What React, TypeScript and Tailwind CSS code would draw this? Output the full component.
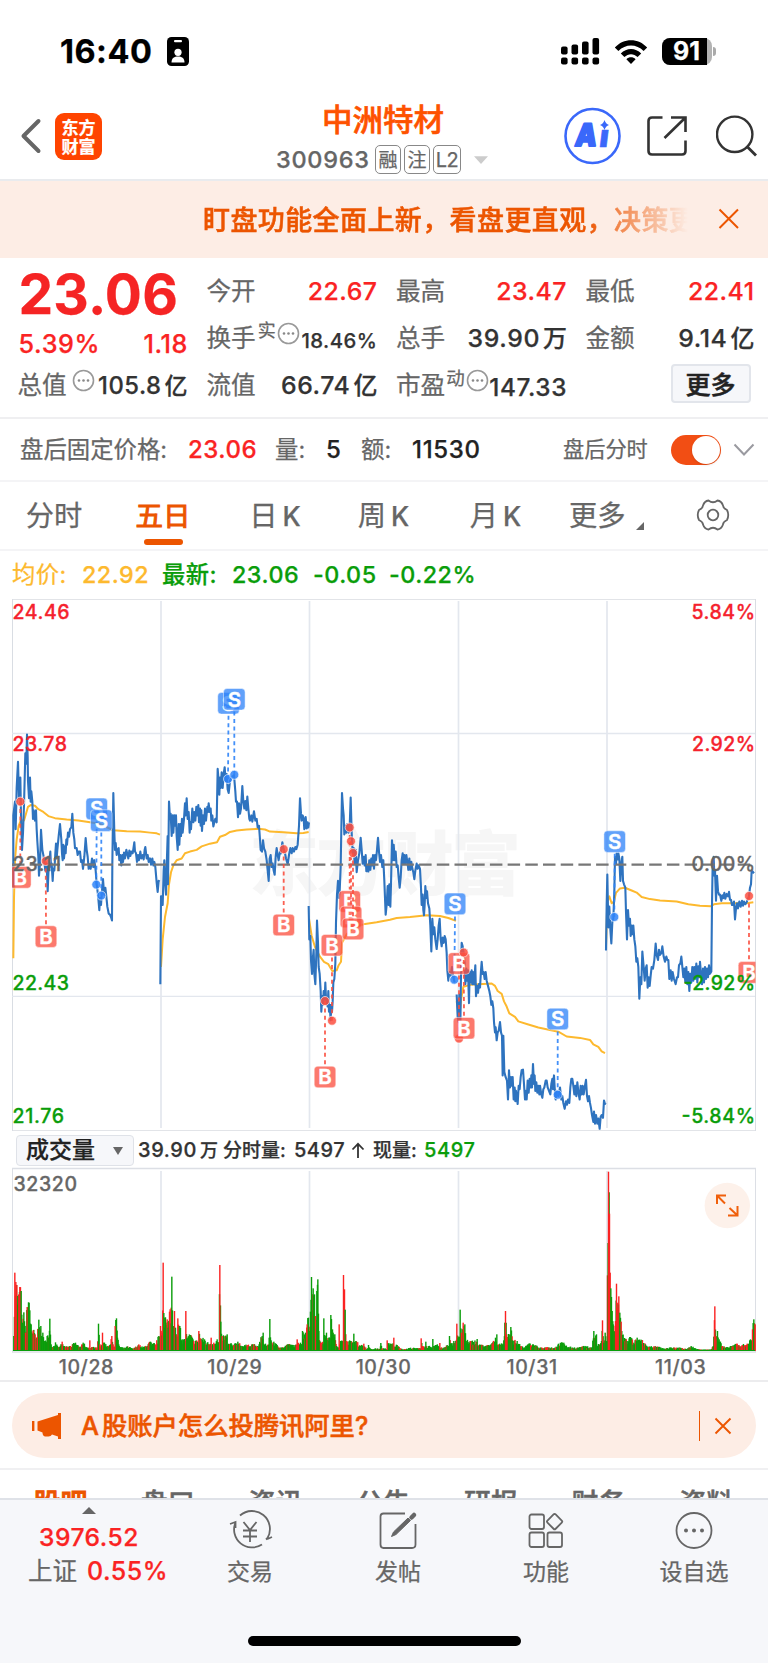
import React from 'react';

const FONT = "font-['Inter','Noto_Sans_CJK_SC',sans-serif]";

/* ---------- price chart data (per-session local units) ---------- */

type Session = { ox: number; price: string; avg: string };

const SESSIONS: Session[] = [
  {
    ox: 0,
    price:
      '40,850 40,640 45,600 47,680 50,560 54,484 57,590 61,530 63,640 66,740 69,690 72,610 76,460 79,490 81,405 83,470 84,540 87,590 90,530 92,600 94,570 97,600 99,650 101,625 105,655 108,625 110,680 112,715 115,760 117,815 120,780 123,682 127,740 131,760 136,800 140,780 143,860 146,790 149,765 151,745 153,790 155,780 158,830 160,795 163,800 166,750 168,722 170,765 172,740 176,700 180,665 184,710 186,750 188,770 190,725 192,765 195,730 197,750 199,710 201,725 204,690 207,702 210,680 214,675 217,635 220,690 223,710 225,735 230,735 233,755 236,745 240,745 243,775 246,770 249,795 253,760 257,706 260,740 263,760 266,795 269,782 272,795 276,765 280,790 283,770 287,800 290,840 294,870 298,915 300,880 303,900 306,860 309,825 311,850 313,870 316,850 319,875 322,905 326,925 330,928 333,935 336,945 337,780 340,575 343,690 345,740 347,720 350,755 353,740 356,735 358,770 361,755 364,785 367,755 369,775 372,748 375,765 379,740 382,752 385,765 388,742 391,758 394,745 398,750 400,738 403,718 405,745 408,750 411,775 414,755 417,770 421,745 424,765 428,755 431,768 434,740 436,732 440,765 443,755 446,775 450,765 453,783 457,765 460,785 463,775 466,790 470,835 473,862 476,830 479,832',
    avg: '40,1055 42,880 45,770 50,710 56,670 62,655 72,655 78,635 84,615 92,610 105,612 115,622 130,630 145,642 165,648 200,652 235,655 270,660 300,665 340,683 380,686 420,687 450,690 470,692 480,696',
  },
  {
    ox: 0,
    price:
      '481,1130 483,875 486,875 488,900 491,800 493,770 495,830 498,870 501,760 503,700 504,840 507,600 510,650 512,635 515,700 518,640 520,690 523,640 526,670 528,640 530,700 533,740 536,665 538,725 541,665 543,700 546,650 548,690 552,650 555,605 557,640 560,590 563,650 566,630 569,690 571,660 573,680 577,620 580,660 583,630 586,655 589,615 592,640 595,610 597,660 600,620 602,670 604,625 606,685 609,640 612,665 615,620 618,655 622,615 624,630 626,605 629,630 632,620 634,655 637,640 640,672 643,660 646,650 650,660 653,505 656,540 658,580 660,530 662,560 665,515 668,560 671,520 674,500 677,540 680,520 683,565 686,575 690,540 695,530 702,523 706,570 708,600 711,600 714,645 717,605 720,635 723,620 727,555 730,600 733,620 736,598 739,625 742,585 745,620 748,650 750,655 754,640 757,658 762,628 766,655 770,650 773,675 777,670 780,710 782,740 786,745 789,712 792,735 796,745 800,770 803,800 806,830 809,765 812,755 815,790 818,780 821,800 824,812 827,760 830,735 833,755 836,770 840,745 843,750 847,718 851,738 855,750 858,765 863,782 867,755 871,735 875,750 878,735 882,745 886,732 889,738 893,725 897,670 900,590 903,635 905,655 908,640 911,650 913,680 915,675 917,645 920,678 923,660 925,675 927,660',
    avg: '483,1080 488,1000 495,935 503,895 507,840 513,805 520,785 530,770 545,765 555,750 570,745 590,740 605,730 630,722 651,718 660,702 675,697 690,688 710,684 740,681 775,679 795,681 810,687 850,689 890,692 910,691 926,688',
  },
  {
    ox: 300,
    price:
      '26,903 28,1000 31,990 33,1060 36,1100 39,1050 41,1030 43,1100 46,1130 49,1040 51,945 54,1010 56,1080 59,1100 62,1150 64,1210 67,1165 69,1190 71,1150 74,1175 76,1125 78,1170 80,1180 83,1195 85,1150 87,1210 89,1190 92,1235 94,1190 96,1210 98,1180 100,1125 103,1115 106,1070 108,950 111,870 114,830 117,880 119,860 122,790 124,680 126,575 129,620 131,640 133,695 136,670 139,690 142,665 146,690 149,675 152,588 155,690 158,750 161,735 164,780 167,740 170,805 174,770 178,750 182,705 185,740 188,780 191,760 194,785 197,755 199,802 202,785 205,803 208,770 211,798 214,765 217,785 219,755 222,795 225,755 228,770 231,740 234,705 237,745 240,775 243,755 247,790 250,770 253,830 257,928 260,900 263,845 266,900 268,840 271,905 273,840 276,712 279,770 281,725 284,770 287,745 290,790 293,785 296,820 299,850 302,820 305,770 308,750 310,780 313,755 316,780 319,755 322,775 325,798 328,765 331,798 334,775 337,795 340,805 343,825 346,800 350,780 353,795 356,785 360,795 363,850 365,900 368,870 370,915 372,930 374,900 376,845 379,880 381,860 384,895 388,910 391,960 394,1035 397,940 400,985 403,965 406,1000 410,1028 413,1000 416,960 419,940 422,1000 425,1020 428,995 431,1010 434,990 437,1000 440,1040 442,1090 445,1120 448,1095 452,1105 456,1080 460,1110 464,1125',
    avg: '27,940 35,990 45,1022 60,1050 72,1065 85,1072 97,1092 110,1090 116,1075 123,1065 126,1010 140,985 160,965 195,955 230,950 270,943 290,938 330,935 380,930 420,932 445,938 468,946',
  },
  {
    ox: 300,
    price:
      '470,1160 473,1225 476,1240 478,1160 481,1260 483,1100 485,1010 488,1020 491,1040 494,1070 496,1130 499,1085 501,1120 504,1090 507,1185 509,1095 512,1125 515,1090 517,1130 519,1095 522,1130 526,1075 528,1165 531,1135 534,1155 537,1130 540,1140 543,1090 545,1065 548,1100 551,1095 554,1115 557,1095 560,1120 564,1135 568,1150 571,1165 574,1190 577,1180 580,1200 582,1240 585,1270 587,1255 590,1293 593,1270 596,1265 600,1240 603,1270 606,1280 608,1395 610,1280 613,1385 617,1400 621,1410 624,1465 627,1380 630,1430 633,1400 636,1425 638,1400 641,1465 644,1430 646,1470 648,1440 653,1478 656,1425 659,1435 662,1400 665,1380 669,1378 672,1420 675,1465 678,1440 680,1465 683,1410 686,1445 689,1405 692,1430 694,1395 696,1430 699,1362 702,1420 704,1395 706,1440 709,1415 712,1445 715,1425 718,1450 720,1425 724,1450 727,1460 730,1435 733,1430 737,1410 740,1410 743,1430 747,1440 751,1450 754,1420 757,1405 759,1435 762,1395 764,1430 767,1465 770,1440 775,1455 780,1430 784,1465 787,1455 790,1475 794,1492 798,1470 801,1480 804,1465 808,1475 811,1430 814,1405 817,1405 820,1425 823,1450 826,1425 829,1455 832,1415 836,1450 839,1465 842,1425 845,1450 848,1425 851,1450 854,1430 858,1408 861,1455 864,1470 867,1455 870,1475 873,1490 876,1510 880,1530 882,1500 885,1535 888,1510 892,1535 895,1520 899,1550 902,1515 905,1510 909,1518 912,1468 915,1478 917,1475',
    avg: '470,1180 478,1230 484,1170 490,1138 510,1132 575,1128 585,1135 593,1150 605,1158 612,1180 620,1195 628,1215 645,1225 655,1238 685,1247 715,1256 750,1263 775,1268 800,1282 840,1286 870,1292 880,1305 895,1312 905,1325 915,1330',
  },
  {
    ox: 500,
    price:
      '318,1032 320,900 322,812 325,965 328,905 331,970 334,1012 337,950 340,940 343,860 345,760 348,780 350,750 353,768 355,750 358,765 361,830 364,780 367,760 369,830 372,840 376,850 378,920 381,1000 384,915 387,960 390,940 392,990 395,960 397,985 400,960 403,1000 406,1020 409,1065 412,1055 415,1080 418,1172 421,1110 424,1130 427,1035 431,1080 434,1120 437,1085 440,1075 443,1140 446,1110 449,1135 452,1105 455,1080 459,1085 463,1060 467,1012 470,1045 474,1060 477,1030 480,1045 484,1040 487,1020 491,1050 495,1065 499,1050 502,1060 505,1060 508,1115 512,1090 515,1120 518,1095 522,1115 527,1130 531,1110 534,1110 537,1075 541,1070 544,1050 547,1080 550,1110 553,1085 556,1125 559,1080 562,1130 565,1095 568,1150 571,1100 574,1125 577,1080 580,1120 583,1080 586,1110 589,1070 592,1125 595,1078 598,1110 600,1065 603,1100 606,1130 609,1085 612,1125 615,1080 618,1115 621,1085 624,1110 627,1075 630,1100 634,1093 636,900 638,780 641,760 643,815 645,800 648,888 651,815 654,860 657,870 660,870 664,888 667,872 670,880 673,865 676,882 680,868 684,875 687,862 690,885 693,885 696,900 700,900 702,890 705,942 708,910 711,895 714,910 718,890 722,905 726,888 729,902 732,890 736,898 740,892 747,875 750,850 753,840 755,800 762,808',
    avg: '318,1020 322,890 328,875 335,895 342,890 348,865 360,852 375,850 395,858 410,864 425,877 450,883 480,887 530,890 565,898 600,902 633,904 642,898 665,895 700,895 740,895 760,892',
  },
];

type Mark = { k: 'B' | 'S'; x: number; y: number; dx: number; dy: number };

const MARKS: Mark[] = [
  { k: 'S', x: 96.7, y: 808.9, dx: 96.3, dy: 884.6 },
  { k: 'S', x: 101.3, y: 820.6, dx: 101.3, dy: 895.6 },
  { k: 'S', x: 228.5, y: 703.3, dx: 228, dy: 779 },
  { k: 'S', x: 234.3, y: 699.3, dx: 234.3, dy: 774.8 },
  { k: 'B', x: 20.3, y: 877.4, dx: 20.3, dy: 801.6 },
  { k: 'B', x: 46, y: 936.6, dx: 45.7, dy: 861 },
  { k: 'B', x: 283.7, y: 925, dx: 283.7, dy: 849.2 },
  { k: 'B', x: 325, y: 1077, dx: 325, dy: 1001 },
  { k: 'B', x: 332, y: 945.2, dx: 332, dy: 1020.7 },
  { k: 'B', x: 349.7, y: 901.5, dx: 349.7, dy: 827.5 },
  { k: 'B', x: 351, y: 917, dx: 351, dy: 841.2 },
  { k: 'B', x: 353, y: 929, dx: 353, dy: 853 },
  { k: 'S', x: 455, y: 903.9, dx: 454.3, dy: 979.7 },
  { k: 'B', x: 459, y: 963.5, dx: 459, dy: 1038.6 },
  { k: 'B', x: 464, y: 1028.2, dx: 463.7, dy: 952.5 },
  { k: 'S', x: 557.7, y: 1019, dx: 557.7, dy: 1094.7 },
  { k: 'S', x: 614.7, y: 841.6, dx: 614.3, dy: 917 },
  { k: 'B', x: 749, y: 972.4, dx: 749, dy: 896 },
];

const LABELS: [string, number, 'start' | 'end', string, number][] = [
  ['24.46', 619, 'start', '#f5222d', 57],
  ['23.78', 751, 'start', '#f5222d', 54.5],
  ['23.11', 871, 'start', '#666666', 48.5],
  ['22.43', 990, 'start', '#0a9d0a', 56.5],
  ['21.76', 1122.6, 'start', '#0a9d0a', 51.5],
  ['5.84%', 619, 'end', '#f5222d', 63.5],
  ['2.92%', 751, 'end', '#f5222d', 63],
  ['0.00%', 871, 'end', '#666666', 63.5],
  ['-2.92%', 990, 'end', '#0a9d0a', 71.5],
  ['-5.84%', 1122.6, 'end', '#0a9d0a', 73.5],
];

function PriceChart() {
  return (
    <svg className="block h-[535px] w-[768px]" viewBox="0 597 768 535">
      <defs>
        <clipPath id="plot">
          <rect x="12" y="598" width="743.5" height="533" />
        </clipPath>
      </defs>
      <text x="249" y="890" fontSize="70" fontWeight="900" fill="#f6f6f6" textLength="272" fontFamily="'Noto Sans CJK SC', sans-serif">
        东方财富
      </text>
      <g fill="none" stroke="#e3e7ee">
        <path d="M12 599.5H756M12 1130.5H756" stroke="#e2e4e8" />
        <path d="M12.5 599V1131M755.5 599V1131" stroke="#d9dde3" />
        <path d="M12 733.5H755M12 996.3H755" strokeWidth="1.3" />
        <path d="M161 601V1128M309.5 601V1128M458.5 601V1128M607 601V1128" strokeWidth="1.7" />
      </g>
      {SESSIONS.map((s, i) => (
        <g key={i} transform={`translate(${s.ox} 595) scale(0.33333 0.34439)`} fill="none" strokeLinejoin="round">
          <polyline points={s.avg} stroke="#fdb92e" strokeWidth="2" vectorEffect="non-scaling-stroke" />
          <polyline points={s.price} stroke="#2e73bf" strokeWidth="2.1" vectorEffect="non-scaling-stroke" />
        </g>
      ))}
      <path d="M12 864.7H755" stroke="#777" strokeWidth="2.2" strokeDasharray="12.5 5.2" />
      <g clipPath="url(#plot)">
        {MARKS.map((m, i) => {
          const c = m.k === 'B' ? '#fb4f3f' : '#2f84f8';
          const end = m.dy > m.y ? m.y + 12 : m.y - 12;
          return (
            <g key={i}>
              <path d={`M${m.dx} ${m.dy}L${m.x} ${end}`} stroke={c} strokeWidth="1.8" strokeDasharray="4 3.4" opacity=".9" />
              <circle cx={m.dx} cy={m.dy} r="4.5" fill={c} fillOpacity=".85" stroke="#fff" strokeWidth=".8" strokeOpacity=".8" />
              <rect x={m.x - 10.8} y={m.y - 10.8} width="21.6" height="21.6" rx="3.6" fill={c} fillOpacity=".76" stroke="#fff" strokeWidth=".8" strokeOpacity=".6" />
              <text x={m.x} y={m.y + 7.3} fontSize="20.5" fontWeight="600" fill="#fff" stroke="#fff" strokeWidth=".4" textAnchor="middle" fontFamily="Inter, sans-serif">
                {m.k}
              </text>
            </g>
          );
        })}
      </g>
      {LABELS.map(([t, y, a, c, w]) => (
        <text key={t} x={a === 'start' ? 12.5 : 755} y={y} textAnchor={a} fill={c} stroke={c} strokeWidth=".3" fontSize="19.5" fontWeight="500" textLength={w} fontFamily="Inter, sans-serif">
          {t}
        </text>
      ))}
    </svg>
  );
}

/* ---------- volume chart ---------- */

const VOLUME =
  '40:45g 43:235r 46:207r 49:198r 52:165g 55:170r 58:192r 62:180g 66:85g 70:116g 75:55r 80:132r 84:146g 88:122g 92:80 98:62 104:50 110:42 115:94g 121:75g 127:55 133:30 140:45g 145:40 148:97g 152:20 160:15 165:26 172:12 185:28 195:12 210:15 225:25 240:12 248:25 260:10 268:32r 275:12 290:10 294:82g 298:20 306:55r 312:25 320:15 330:20 334:45r 338:20 344:75r 348:98g 351:40 356:15 370:8 380:14 400:8 415:20 430:12 450:28 465:20 475:45 480:75r 485:55 488:265r 490:114g 493:100 500:95r 503:70 507:118r 512:130r 514:223g 517:75 522:120r 525:70 532:98r 538:75 545:35 556:120r 559:38 570:48 580:30 595:60r 600:38 612:35 620:25 632:40r 640:25 650:35 655:25 658:258r 661:88g 665:45 680:50g 690:22 700:18 712:28 725:15 740:18 760:20 770:12 785:45 788:55g 795:22 806:40g 808:96g 812:32 820:28 830:18 845:10 865:20 880:18 890:35r 900:25 906:60g 915:55 920:80r 924:100g 928:60 933:222g 938:188g 942:170g 945:105r 949:180g 952:215g 955:60 962:25 970:98g 974:40 978:55g 985:40 991:108g 996:65g 1003:50 1008:15 1016:80r 1022:30 1029:228r 1032:185r 1034:124g 1038:30 1050:30 1060:52g 1066:30 1080:15 1090:22 1098:5 1104:18 1112:5 1125:8 1138:6 1141:24g 1145:8 1154:8 1160:32r 1170:22 1180:40r 1190:18 1200:8 1215:5 1230:10 1250:8 1262:38r 1266:15 1276:28g 1285:14 1297:36g 1305:18 1318:24r 1330:10 1340:18 1347:45g 1352:22 1360:30 1369:82r 1373:40 1379:124g 1383:55 1388:85r 1393:80g 1397:30 1410:30 1430:36g 1440:18 1455:15 1475:22 1485:40 1489:50g 1498:22 1508:20 1513:85g 1515:120r 1518:50 1526:50 1531:72g 1536:32 1550:30 1562:15 1570:10 1585:22 1600:18 1620:10 1640:12 1665:10 1674:22 1690:25 1705:12 1730:10 1750:14 1775:12 1780:60g 1788:50g 1795:20 1803:30 1806:92r 1810:25 1814:55g 1819:30 1824:538r 1827:412r 1829:235r 1831:188g 1835:120g 1838:80 1845:90r 1848:202r 1850:130r 1855:164r 1858:115g 1862:88r 1866:48 1880:30 1890:42 1900:25 1910:40 1922:34 1935:20 1945:12 1960:14 1975:12 1990:8 2010:10 2040:10 2058:6 2072:15 2085:8 2105:3 2130:4 2138:15 2143:134r 2146:45 2151:60g 2156:35 2165:15 2180:12 2195:14 2210:22 2225:18 2240:22 2250:35 2256:65r 2260:95g 2264:80';

type Bar = { x: number; h: number; red: boolean };

function buildBars(): Bar[] {
  let seed = 7;
  const rnd = () => {
    seed = (seed * 16807) % 2147483647;
    return seed / 2147483647;
  };
  const keys = VOLUME.split(' ').map((p) => {
    const m = p.match(/^(\d+):(\d+)([rg]?)$/)!;
    return { x: +m[1], h: +m[2], c: m[3] };
  });
  const fill: Bar[] = [];
  const peaks: Bar[] = [];
  for (let i = 0; i < keys.length; i++) {
    const a = keys[i];
    const b = keys[i + 1];
    peaks.push({ x: a.x / 3, h: a.h / 3, red: a.c === 'r' || (a.c === '' && rnd() < 0.3) });
    if (!b) break;
    const la = Math.min(a.h, a.c && b.x - a.x > 5 ? b.h : a.h);
    const lb = Math.min(b.h, b.c && b.x - a.x > 5 ? a.h : b.h);
    for (let x = a.x + 1.9; x < b.x - 0.8; x += 1.9) {
      const t = (x - a.x) / (b.x - a.x);
      const h = (la + (lb - la) * t) * (0.62 + 0.5 * rnd());
      fill.push({ x: x / 3, h: Math.max(h, 4) / 3, red: rnd() < 0.27 });
    }
  }
  return [...fill, ...peaks];
}

const BARS = buildBars();

function VolumeChart() {
  return (
    <svg className="block h-[186px] w-[768px]" viewBox="0 1167 768 186">
      <g fill="none" stroke="#dcdfe5">
        <path d="M12 1168.5H756" strokeWidth="1.6" />
        <path d="M12.5 1168V1352M755.5 1168V1352" />
        <path d="M161 1171V1351M309.5 1171V1351M458.5 1171V1351M607 1171V1351" stroke="#e3e7ee" strokeWidth="1.7" />
        <path d="M12 1352H756" strokeWidth="1.4" />
      </g>
      {BARS.map((b, i) => (
        <rect key={i} x={b.x - 0.2} y={1351 - b.h} width="1.4" height={b.h} fill={b.red ? '#fb2222' : '#0a9d0a'} />
      ))}
      <path d="M13 1350.5H755" stroke="#0a9d0a" strokeWidth="1" />
      <text x="13.5" y="1190.6" fontSize="19.5" fontWeight="500" fill="#666" stroke="#666" strokeWidth=".3" textLength="63.5" fontFamily="Inter, sans-serif">
        32320
      </text>
      <circle cx="727.3" cy="1205.5" r="22.7" fill="#fdf1ea" />
      <g stroke="#f0600c" strokeWidth="2" fill="none">
        <path d="M717 1204V1195.500H726M717.500 1196L725 1203.500" />
        <path d="M728 1215.500H737.500V1206M729.500 1208L737 1215" />
      </g>
    </svg>
  );
}

/* ---------- small pieces ---------- */

const Dots = () => (
  <svg className="size-[23px] shrink-0" viewBox="0 0 23 23">
    <circle cx="11.500" cy="11.500" r="10" fill="none" stroke="#999" strokeWidth="1.600" />
    <circle cx="7" cy="11.500" r="1.300" fill="#888" />
    <circle cx="11.500" cy="11.500" r="1.300" fill="#888" />
    <circle cx="16" cy="11.500" r="1.300" fill="#888" />
  </svg>
);

const Label = ({ children }: { children: React.ReactNode }) => <span className="-ml-px text-[24.6px] text-[#666]">{children}</span>;

const Cell = ({ label, value, unit, red }: { label: string; value: string; unit?: string; red?: boolean }) => (
  <div className="flex h-[47px] items-center justify-between">
    <Label>{label}</Label>
    <span className={red ? 'text-[24.8px] font-medium tracking-[0.5px] text-[#fa2323]' : 'text-[24.8px] font-medium tracking-[0.6px] text-[#333]'}>
      {value}
      {unit && <span className="ml-[3px] text-[24px] tracking-normal">{unit}</span>}
    </span>
  </div>
);

function StatusBar() {
  return (
    <div className="flex h-[93px] items-center pt-[10px] text-black">
      <span className="ml-[60px] w-[107px] pt-[2px] text-[32.500px] font-bold tracking-[0.5px]">16:40</span>
      <svg className="h-[29px] w-[22px]" viewBox="0 0 22 29">
        <rect width="22" height="29" rx="4.500" />
        <rect x="7" y="3" width="8" height="2.300" rx="1" fill="#fff" />
        <circle cx="11" cy="15.300" r="3.600" fill="#fff" />
        <path d="M4.500 25.500c0-4.500 3-6 6.500-6s6.500 1.500 6.500 6z" fill="#fff" />
      </svg>
      <svg className="ml-[372px] h-[28px] w-[40px] -translate-y-px" viewBox="0 0 40 28">
        <rect x="0" y="9.500" width="6.600" height="8" rx="2" />
        <rect x="10.500" y="7.500" width="6.600" height="10" rx="2" />
        <rect x="21" y="4.500" width="6.600" height="13" rx="2" />
        <rect x="31.500" y="1" width="6.600" height="16.500" rx="2" />
        <rect x="0" y="20.500" width="6.600" height="7" rx="2" />
        <rect x="10.500" y="20.500" width="6.600" height="7" rx="2" />
        <rect x="21" y="20.500" width="6.600" height="7" rx="2" />
        <rect x="31.500" y="20.500" width="6.600" height="7" rx="2" />
      </svg>
      <svg className="ml-[13px] h-[26px] w-[34px]" viewBox="0 0 34 26">
        <path d="M.8 8.500C9.500-1.300 24.500-1.300 33.200 8.500L29.600 12C22.500 4.600 11.500 4.600 4.400 12z" />
        <path d="M6.800 14.500c5.600-6 14.800-6 20.400 0l-3.600 3.600c-3.800-3.900-9.400-3.900-13.200 0z" />
        <path d="M12.400 20.200c2.600-2.500 6.600-2.500 9.200 0L17 25z" />
      </svg>
      <div className="ml-[14px] flex h-[27px] w-[50px] rounded-[8px] bg-[#b3b3b3]">
        <div className="flex h-[27px] w-[45px] items-center justify-center rounded-l-[8px] bg-black pl-[4px] text-[25px] font-bold text-white">91</div>
      </div>
      <div className="ml-[1px] h-[9px] w-[3px] rounded-r-full bg-[#aaa]" />
    </div>
  );
}

function Header() {
  return (
    <div className="flex h-[88px] items-center border-b-2 border-[#e9ebee] text-[#666]">
      <svg className="ml-[20px] h-[38px] w-[22px]" viewBox="0 0 22 38">
        <path d="M18.500 4L3.500 19L18.500 34" fill="none" stroke="#666" strokeWidth="4" strokeLinecap="round" strokeLinejoin="round" />
      </svg>
      <div className="ml-[13px] flex size-[47px] flex-col items-center justify-center rounded-[9px] bg-[#ff4400] font-['Noto_Sans_CJK_SC',sans-serif] text-[17px] leading-[19px] font-bold text-white">
        <span>东方</span>
        <span>财富</span>
      </div>
      <div className="ml-[174px] flex w-[220px] flex-col">
        <div className="ml-[46px] pt-[7px] text-[30.500px] font-medium text-[#fe5200] [-webkit-text-stroke:0.6px_#fe5200]">中洲特材</div>
        <div className="mt-[10px] flex h-[29px] items-center">
          <span className="w-[99px] text-[23.500px] font-medium tracking-[0.7px]">300963</span>
          <span className="flex h-[29px] w-[26px] items-center justify-center rounded-[5px] border border-[#888] pt-px text-[19px]">融</span>
          <span className="ml-[3px] flex h-[29px] w-[26px] items-center justify-center rounded-[5px] border border-[#888] pt-px text-[19px]">注</span>
          <span className="ml-[3px] flex h-[29px] w-[28px] items-center justify-center rounded-[5px] border border-[#888] text-[20px] tracking-[-0.5px]">L2</span>
          <svg className="ml-[13px] h-[8px] w-[14px]" viewBox="0 0 14 8">
            <path d="M0 0.300H14L7 8z" fill="#ccc" />
          </svg>
        </div>
      </div>
      <svg className="ml-[67px] size-[58px] shrink-0" viewBox="0 0 58 58">
        <circle cx="29.500" cy="29" r="27" fill="none" stroke="#3a68fa" strokeWidth="2.600" />
        <g fill="#3a68fa" stroke="#3a68fa" fontFamily="Inter, sans-serif" fontWeight="900" transform="skewX(-7)">
          <text x="16" y="39.500" fontSize="31" strokeWidth="2" strokeLinejoin="round" textLength="21.500" lengthAdjust="spacingAndGlyphs">A</text>
          <text x="40.500" y="40" fontSize="31" strokeWidth=".6">ı</text>
        </g>
        <path d="M41.500 13q1.200 4 4.500 5q-3.300 1-4.500 5q-1.200-4-4.500-5q3.300-1 4.500-5z" fill="#3a68fa" />
      </svg>
      <svg className="ml-[25px] size-[42px] shrink-0" viewBox="0 0 42 42">
        <path d="M16.500 2.500H6Q2.500 2.500 2.500 6V36Q2.500 39.500 6 39.500H36Q39.500 39.500 39.500 36V25.500M25 2.500H39.500V17M39.500 2.500L18.500 23" fill="none" stroke="#333" strokeWidth="2.600" />
      </svg>
      <svg className="ml-[28px] size-[42px] shrink-0" viewBox="0 0 42 42">
        <circle cx="18.700" cy="19.300" r="17.700" fill="none" stroke="#333" strokeWidth="2.400" />
        <path d="M30.500 31L40 40.500" stroke="#333" strokeWidth="2.800" />
      </svg>
    </div>
  );
}

const TAB = 'flex items-center justify-center';
const LETTER = 'ml-[5px] text-[26.5px] font-medium';

export default function App() {
  return (
    <div className={`${FONT} flex h-[1663px] w-[768px] flex-col overflow-hidden bg-white leading-none whitespace-nowrap [-webkit-text-stroke:0.25px]`}>
      <StatusBar />
      <Header />

      <div className="flex h-[77px] items-center bg-[#fdede5] pb-px">
        <div className="ml-[203px] w-[490px] overflow-hidden pt-[7px] pb-1 text-[27px] font-medium tracking-[0.400px] text-[#ec5500] [-webkit-text-stroke:0.5px_#ec5500] [mask-image:linear-gradient(90deg,#000_78%,transparent_99%)]">
          盯盘功能全面上新，看盘更直观，决策更
        </div>
        <svg className="ml-[25px] size-[22px]" viewBox="0 0 22 22">
          <path d="M1.500 1.500L20 20M20 1.500L1.500 20" stroke="#ec5500" strokeWidth="2" />
        </svg>
      </div>

      {/* quote */}
      <div className="flex h-[161px] gap-[19.500px] border-b-2 border-[#efeff1] pt-[10px] pl-[18.500px]">
        <div className="w-[169.500px]">
          <div className="flex h-[52px] items-center text-[55px] font-bold tracking-[0.2px] text-[#f52424]">23.06</div>
          <div className="flex h-[48px] items-center justify-between pt-[2px] text-[25.200px] font-medium tracking-[0.6px] text-[#fa2323]">
            <span>5.39%</span>
            <span>1.18</span>
          </div>
          <div className="flex h-[34px] items-center text-[#333]">
            <Label>总值</Label>
            <span className="-mt-[10px] ml-[5px]"><Dots /></span>
            <span className="ml-auto pt-[2px] text-[23.800px] font-medium tracking-[0.500px]">
              105.8<span className="ml-[3px] text-[23px]">亿</span>
            </span>
          </div>
        </div>
        <div className="w-[170px]">
          <Cell label="今开" value="22.67" red />
          <div className="flex h-[47px] items-center text-[#333]">
            <Label>换手</Label>
            <span className="-mt-[15px] ml-[2px] text-[18px] text-[#666]">实</span>
            <span className="-mt-[10px] ml-[1px]"><Dots /></span>
            <span className="ml-auto pt-[6px] text-[20.300px] font-medium tracking-[0.5px]">18.46%</span>
          </div>
          <Cell label="流值" value="66.74" unit="亿" />
        </div>
        <div className="w-[170px]">
          <Cell label="最高" value="23.47" red />
          <Cell label="总手" value="39.90" unit="万" />
          <div className="flex h-[47px] items-center text-[#333]">
            <Label>市盈</Label>
            <span className="-mt-[15px] ml-[1px] text-[18.500px] text-[#666]">动</span>
            <span className="-mt-[10px] ml-[1px]"><Dots /></span>
            <span className="ml-auto pt-[3px] text-[24.300px] font-medium tracking-[0.600px]">147.33</span>
          </div>
        </div>
        <div className="w-[168px]">
          <Cell label="最低" value="22.41" red />
          <Cell label="金额" value="9.14" unit="亿" />
          <div className="mt-[2px] ml-[84px] flex h-[39px] w-[80px] items-center justify-center rounded-[4px] border-2 border-[#e2e5eb] bg-[#f6f7fa] pt-[3px] text-[25px] font-medium text-[#222] [-webkit-text-stroke:0.5px_#222]">更多</div>
        </div>
      </div>

      {/* after-hours */}
      <div className="flex h-[63px] items-center border-b-2 border-[#f4f4f6] text-[23.400px] text-[#666]">
        <span className="ml-[20px] w-[168px]">盘后固定价格:</span>
        <span className="w-[87px] text-[24px] font-medium tracking-[0.500px] text-[#fa2323]">23.06</span>
        <span className="w-[51px]">量:</span>
        <span className="w-[35px] text-[24px] font-medium text-[#222]">5</span>
        <span className="w-[51px]">额:</span>
        <span className="w-[151px] text-[24px] font-medium tracking-[0.700px] text-[#222]">11530</span>
        <span className="w-[108px] text-[21.200px]">盘后分时</span>
        <div className="flex h-[30px] w-[50px] items-center justify-end rounded-full bg-[#f24e14] pr-px">
          <div className="size-[28px] rounded-full bg-white shadow" />
        </div>
        <svg className="ml-[12px] h-[14px] w-[22px]" viewBox="0 0 22 14">
          <path d="M1.500 1.500L11 11.500L20.500 1.500" fill="none" stroke="#9a9aa0" strokeWidth="2" />
        </svg>
      </div>

      {/* period tabs */}
      <div className="flex h-[69px] border-b-2 border-[#f4f4f6] pb-px text-[28.300px] text-[#666]">
        <div className={`${TAB} w-[108px] pt-[2px]`}>分时</div>
        <div className="ml-px flex w-[108px] flex-col items-center text-[#ec5500]">
          <span className="mt-[21px] text-[27.500px] [-webkit-text-stroke:1px_#ec5500]">五日</span>
          <span className="mt-[8px] h-[6px] w-[39px] rounded-full bg-[#ec5500]" />
        </div>
        <div className={`${TAB} w-[116px] pt-[2px]`}>日<span className={LETTER}>K</span></div>
        <div className={`${TAB} w-[101px] pt-[2px]`}>周<span className={LETTER}>K</span></div>
        <div className={`${TAB} w-[123px] pt-[2px]`}>月<span className={LETTER}>K</span></div>
        <div className="ml-[12px] flex w-[117px] items-center pt-[2px]">
          更多
          <svg className="mt-[19px] ml-[10px] size-[8px]" viewBox="0 0 8 8"><path d="M8 0V8H0z" fill="#666" /></svg>
        </div>
        <div className="flex items-center">
          <svg className="ml-[10px] size-[34px]" viewBox="0 0 34 34" fill="none" stroke="#666" strokeWidth="1.800" strokeLinejoin="round">
            <path d="M12.500 2.500Q17 6 21.500 2.500Q25.500 3 27 7.500Q27 10 31 12Q33.500 17 31 22Q27 24 27 26.500Q25.500 31 21.500 31.500Q17 28 12.500 31.500Q8.500 31 7 26.500Q7 24 3 22Q.5 17 3 12Q7 10 7 7.500Q8.500 3 12.500 2.500z" />
            <circle cx="17" cy="17" r="5.300" />
          </svg>
        </div>
      </div>

      <div className="flex h-[46px] items-center pt-[2px] text-[23.300px] font-medium tracking-[0.5px] text-[#0a9d0a]">
        <span className="ml-[12px] w-[70px] font-normal text-[#fdb92e]">均价:</span>
        <span className="w-[80px] text-[#fdb92e]">22.92</span>
        <span className="w-[70px]">最新:</span>
        <span className="w-[81px]">23.06</span>
        <span className="w-[76px]">-0.05</span>
        <span>-0.22%</span>
      </div>

      <PriceChart />

      <div className="flex h-[35px] items-center pt-px text-[20px] font-medium text-[#333]">
        <div className="ml-[16px] flex h-[31px] w-[118px] items-center rounded-[4px] border border-[#dfe2e8] bg-[#f6f7fa] pt-px pl-[9px] text-[23px] text-[#222]">
          成交量
          <svg className="ml-[18px] h-[8px] w-[10px]" viewBox="0 0 10 8"><path d="M0 0H10L5 8z" fill="#666" /></svg>
        </div>
        <span className="ml-[4px] w-[85px] tracking-[0.6px]">39.90<span className="ml-[3px] text-[18px]">万</span></span>
        <span className="w-[71px] text-[19px]">分时量:</span>
        <span className="w-[56px] tracking-[0.5px]">5497</span>
        <svg className="h-[17px] w-[23px]" viewBox="0 0 23 17"><path d="M8 16V2M2.500 7.500L8 1.800L13.500 7.500" fill="none" stroke="#333" strokeWidth="1.800" /></svg>
        <span className="w-[51px] text-[19px]">现量:</span>
        <span className="tracking-[0.600px] text-[#0a9d0a]">5497</span>
      </div>

      <VolumeChart />

      <div className="flex h-[29px] items-center border-b-2 border-[#ececee] pt-[3px] pl-[12px] text-[19.500px] font-medium tracking-[0.6px] text-[#666]">
        {['10/28', '10/29', '10/30', '10/31', '11/03'].map((d) => (
          <span key={d} className="w-[148.600px] text-center">{d}</span>
        ))}
      </div>

      <div className="mx-[12px] mt-[11px] flex h-[65px] items-center rounded-full bg-[#fdede5] text-[#ec5500]">
        <svg className="ml-[19px] h-[28px] w-[32px]" viewBox="0 0 32 28" fill="currentColor">
          <rect x="1" y="9" width="2.400" height="10" />
          <path d="M6.500 9.500L27 3V1H30V27H27V24.500L21 22.500Q20 24.500 17.500 24.500H14Q11.500 24 11.500 20.500L6.500 18.500z" />
        </svg>
        <span className="ml-[18px] text-[25.300px] font-medium [-webkit-text-stroke:0.5px_#ec5500]">
          A<span className="ml-[3px]">股账户怎么投腾讯阿里?</span>
        </span>
        <span className="ml-auto h-[30px] w-[1.500px] bg-[#ec5500]" />
        <svg className="mr-[24px] ml-[14px] size-[18px]" viewBox="0 0 18 18">
          <path d="M1.500 1.500L16.500 16.500M16.500 1.500L1.500 16.500" stroke="#ec5500" strokeWidth="1.900" />
        </svg>
      </div>

      <div className="mt-[10px] flex h-[30px] overflow-hidden border-t-2 border-[#f0f0f2] pt-[20px] pl-[7px] text-[27px] font-medium text-[#666] [-webkit-text-stroke:0.5px]">
        <span className="w-[107px] text-center text-[#ec5500] [-webkit-text-stroke:1px_#ec5500]">股吧</span>
        {['盘口', '资讯', '公告', '研报', '财务', '资料'].map((t) => (
          <span key={t} className="w-[107.700px] text-center">{t}</span>
        ))}
      </div>

      {/* bottom navigation */}
      <div className="flex h-[165px] flex-col items-center border-t-2 border-[#dfe2e8] bg-[#f6f7fa]">
        <div className="flex h-[136px] w-full text-[23px] text-[#666]">
          <div className="flex w-[176px] flex-col">
            <svg className="mt-[7px] ml-[82px] h-[7px] w-[14px]" viewBox="0 0 14 7"><path d="M0 7H14L7 0z" fill="#666" /></svg>
            <span className="mt-[11px] ml-[39px] text-[24.600px] font-medium tracking-[0.500px] text-[#fa2323]">3976.52</span>
            <span className="mt-[9px] ml-[28px] text-[24.500px]">
              上证<span className="ml-[10px] text-[25px] font-medium tracking-[0.500px] text-[#fa2323]">0.55%</span>
            </span>
          </div>
          <div className="flex w-[148px] flex-col items-center pt-[10px]">
            <svg className="h-[42px] w-[46px]" viewBox="0 0 46 42" fill="none" stroke="#666" strokeWidth="1.800">
              <path d="M13 5.500A18 18 0 0 1 40.500 28M40.500 28L39 29.500M40.500 29L45 27M35 34.500A18 18 0 0 1 8.500 12.500M3 14L8.500 12V18" />
              <path d="M16.500 12L23 20L29.500 12M16 20.500H30M16 26.500H30M23 20V32" />
            </svg>
            <span className="mt-[9px]">交易</span>
          </div>
          <div className="flex w-[148px] flex-col items-center pt-[10px]">
            <svg className="h-[42px] w-[42px]" viewBox="0 0 42 42" fill="none" stroke="#666" strokeWidth="1.800">
              <path d="M28 3.500H6.500Q3.500 3.500 3.500 6.500V34.500Q3.500 38 6.500 38H35Q38.500 38 38.500 34.500V14" />
              <path d="M14.500 26.500L16.500 22L31 8L33.500 10.500L19 24.500z" fill="#666" strokeWidth="1" />
              <path d="M34.500 7.500L37 5" strokeWidth="4.500" strokeLinecap="round" />
            </svg>
            <span className="mt-[9px]">发帖</span>
          </div>
          <div className="flex w-[148px] flex-col items-center pt-[10px]">
            <svg className="h-[42px] w-[42px]" viewBox="0 0 42 42" fill="none" stroke="#666" strokeWidth="1.800">
              <rect x="4.500" y="4.500" width="14.500" height="14.500" rx="2" />
              <rect x="4.500" y="22.500" width="14.500" height="14.500" rx="2" />
              <rect x="22.500" y="22.500" width="14.500" height="14.500" rx="2" />
              <rect x="23.800" y="5.800" width="11.600" height="11.600" rx="1.500" transform="rotate(45 29.600 11.600)" />
            </svg>
            <span className="mt-[9px]">功能</span>
          </div>
          <div className="flex w-[148px] flex-col items-center pt-[10px]">
            <svg className="h-[42px] w-[42px]" viewBox="0 0 42 42">
              <circle cx="21" cy="20.500" r="17.500" fill="none" stroke="#666" strokeWidth="1.800" />
              <g fill="#666"><circle cx="13" cy="20.500" r="2" /><circle cx="21" cy="20.500" r="2" /><circle cx="29" cy="20.500" r="2" /></g>
            </svg>
            <span className="mt-[9px]">设自选</span>
          </div>
        </div>
        <div className="h-[10px] w-[273px] rounded-full bg-black" />
      </div>
    </div>
  );
}
